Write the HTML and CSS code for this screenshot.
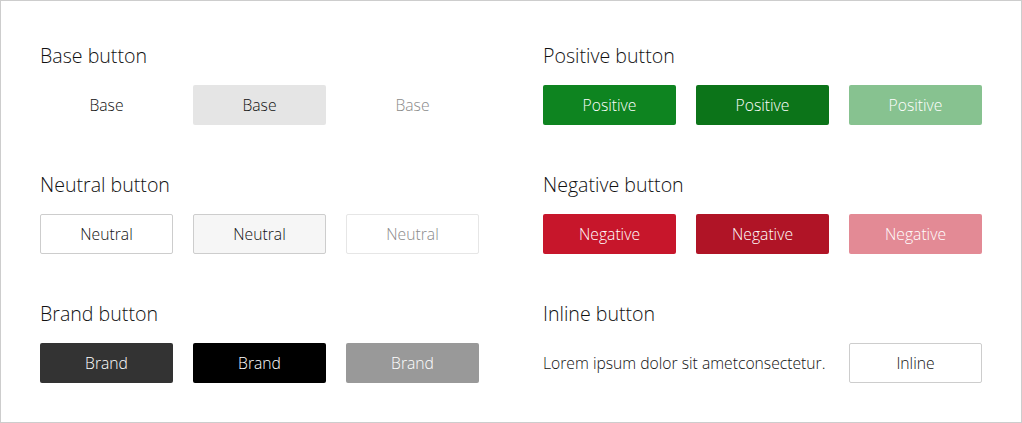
FILE: index.html
```html
<!DOCTYPE html>
<html lang="en">
<head>
<meta charset="utf-8">
<title>Buttons</title>
<link rel="stylesheet" href="styles.css">
</head>
<body>
<main class="frame">
  <section class="group">
    <h2 class="title">Base button</h2>
    <div class="row">
      <button class="btn btn-base">Base</button>
      <button class="btn btn-base is-active">Base</button>
      <button class="btn btn-base is-disabled">Base</button>
    </div>
  </section>
  <section class="group">
    <h2 class="title">Positive button</h2>
    <div class="row">
      <button class="btn btn-positive">Positive</button>
      <button class="btn btn-positive is-active">Positive</button>
      <button class="btn btn-positive is-disabled">Positive</button>
    </div>
  </section>
  <section class="group">
    <h2 class="title">Neutral button</h2>
    <div class="row">
      <button class="btn btn-neutral">Neutral</button>
      <button class="btn btn-neutral is-active">Neutral</button>
      <button class="btn btn-neutral is-disabled">Neutral</button>
    </div>
  </section>
  <section class="group">
    <h2 class="title">Negative button</h2>
    <div class="row">
      <button class="btn btn-negative">Negative</button>
      <button class="btn btn-negative is-active">Negative</button>
      <button class="btn btn-negative is-disabled">Negative</button>
    </div>
  </section>
  <section class="group">
    <h2 class="title">Brand button</h2>
    <div class="row">
      <button class="btn btn-brand">Brand</button>
      <button class="btn btn-brand is-active">Brand</button>
      <button class="btn btn-brand is-disabled">Brand</button>
    </div>
  </section>
  <section class="group">
    <h2 class="title">Inline button</h2>
    <div class="row inline-row">
      <p class="inline-text">Lorem ipsum dolor sit ametconsectetur.</p>
      <button class="btn btn-neutral btn-inline">Inline</button>
    </div>
  </section>
</main>
</body>
</html>
```
FILE: styles.css
```css
* { box-sizing: border-box; }
html, body { margin: 0; padding: 0; background: #fff; }
body {
  font-family: "Open Sans", "Noto Sans", sans-serif;
  font-weight: 300;
  color: #111;
}
.frame {
  width: 1022px;
  height: 423px;
  border: 1px solid #cdcdcd;
  padding: 39px 39px 0 39px;
  display: grid;
  grid-template-columns: 439px 439px;
  column-gap: 64px;
  row-gap: 44px;
  align-content: start;
}
.group { display: flex; flex-direction: column; }
.title {
  margin: 0 0 13px 0;
  font-size: 19.6px;
  line-height: 32px;
  font-weight: 300;
  color: #111;
}
.row {
  display: grid;
  grid-template-columns: 133px 133px 133px;
  column-gap: 20px;
}
.btn {
  height: 40px;
  border: 1px solid transparent;
  border-radius: 2px;
  font-family: inherit;
  font-weight: 300;
  font-size: 15.7px;
  color: #111;
  background: transparent;
  padding: 0;
  cursor: pointer;
}
.btn-base.is-active { background: #e5e5e5; }
.btn-base.is-disabled { color: #8a8a8a; }
.btn-neutral { border-color: #cdcdcd; background: #fff; }
.btn-neutral.is-active { background: #f6f6f6; }
.btn-neutral.is-disabled { border-color: #e6e6e6; color: #8a8a8a; }
.btn-positive { background: #0e8420; color: #fff; }
.btn-positive.is-active { background: #0c7419; }
.btn-positive.is-disabled { background: #87c290; }
.btn-negative { background: #c7162b; color: #fff; }
.btn-negative.is-active { background: #b01426; }
.btn-negative.is-disabled { background: #e38a95; }
.btn-brand { background: #333; color: #fff; }
.btn-brand.is-active { background: #000; }
.btn-brand.is-disabled { background: #999; }
.inline-row {
  display: flex;
  justify-content: space-between;
  align-items: center;
}
.btn-inline { width: 133px; flex: none; }
.inline-text {
  margin: 0;
  font-size: 15.7px;
  color: #111;
}
```
